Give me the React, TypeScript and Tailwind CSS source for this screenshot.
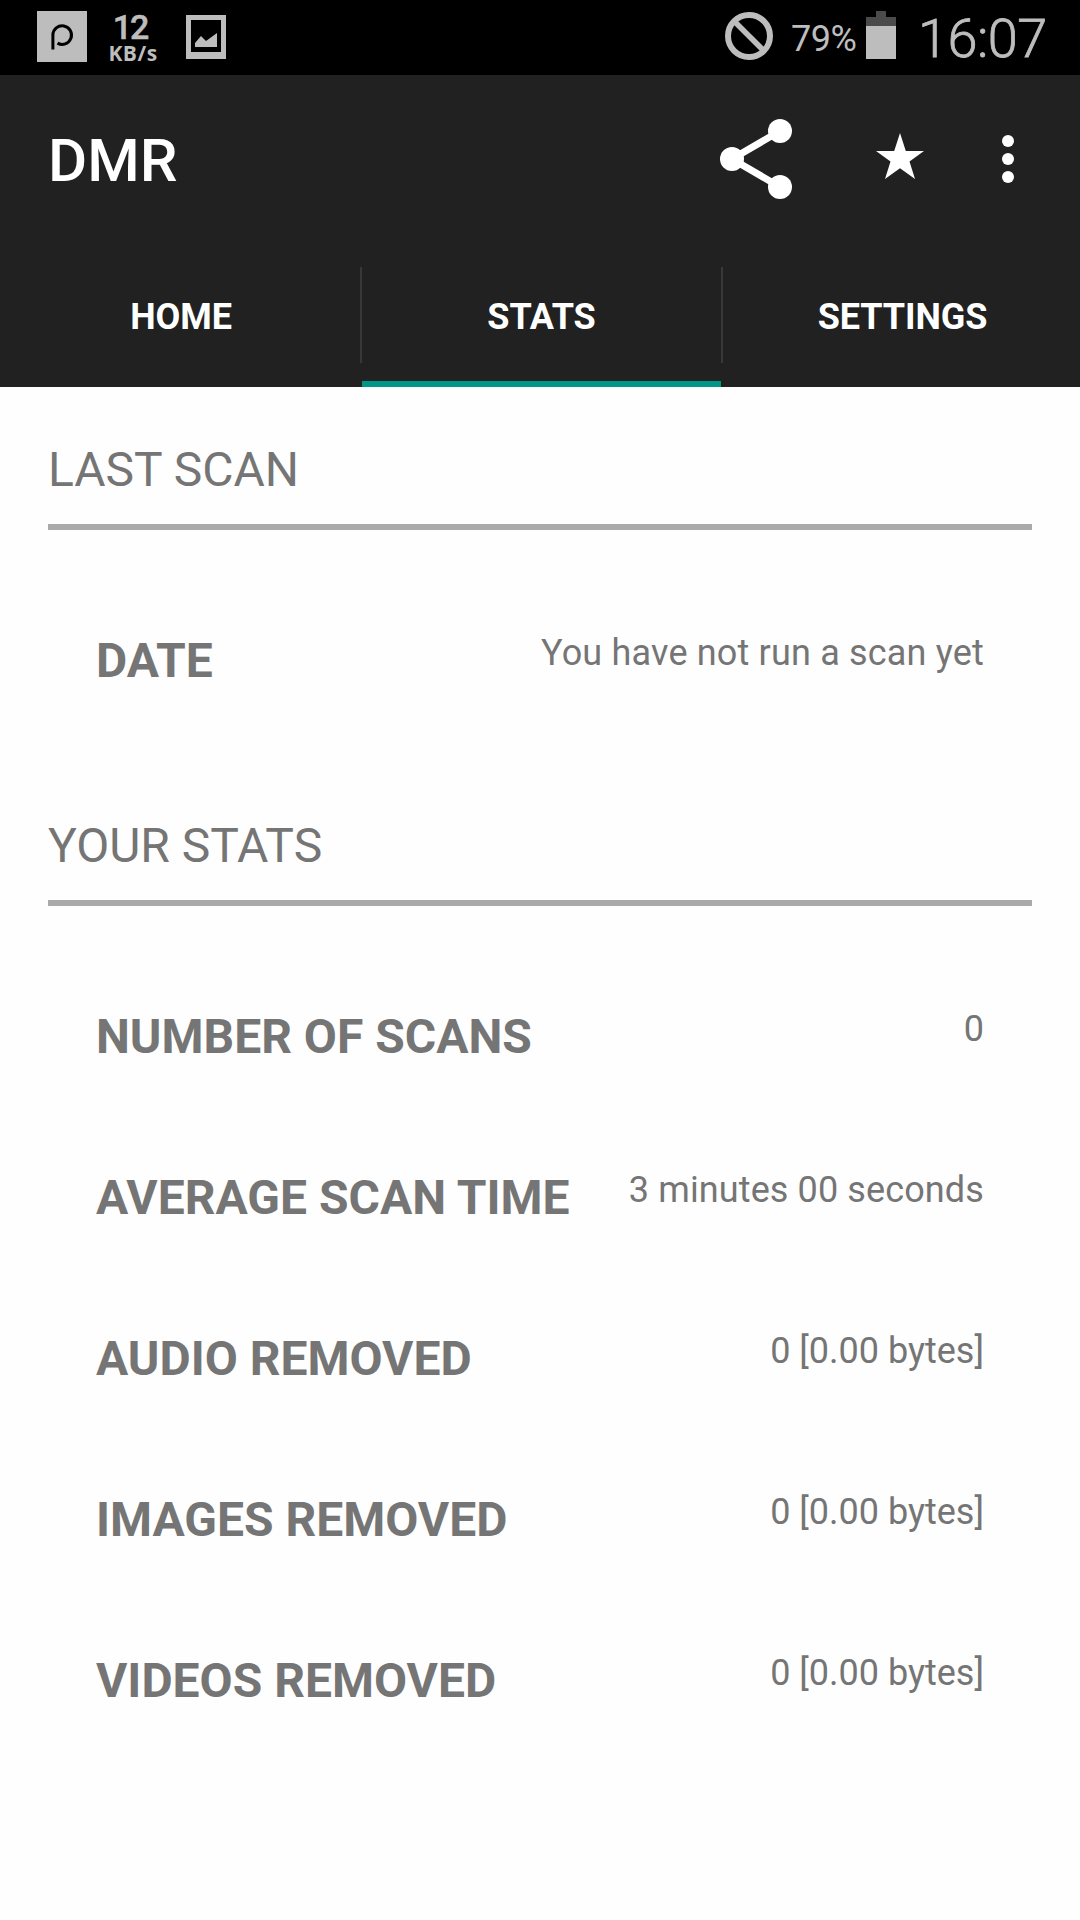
type Stat = { label: string; value: string; valueClass?: string };

const tabs = ['HOME', 'STATS', 'SETTINGS'];

const lastScan: Stat[] = [
  { label: 'DATE', value: 'You have not run a scan yet', valueClass: 'tracking-[0.18px]' },
];

const yourStats: Stat[] = [
  { label: 'NUMBER OF SCANS', value: '0' },
  { label: 'AVERAGE SCAN TIME', value: '3 minutes 00 seconds', valueClass: 'tracking-[0.12px]' },
  { label: 'AUDIO REMOVED', value: '0 [0.00 bytes]' },
  { label: 'IMAGES REMOVED', value: '0 [0.00 bytes]' },
  { label: 'VIDEOS REMOVED', value: '0 [0.00 bytes]' },
];

const StatusBar = () => (
  <div className="flex h-[75px] justify-between bg-black text-[#bdbdbd]">
    <div className="flex pl-[37px]">
      <svg className="mt-[11px] h-[51px] w-[50px]" viewBox="0 0 50 51">
        <rect width="50" height="51" fill="#bdbdbd" />
        <path d="M15.9 38.5V24A9.3 9.3 0 1 1 20.5 32.1" fill="none" stroke="#000" strokeWidth="3" />
      </svg>
      <div className="ml-[17px] flex w-[58px] flex-col items-center pt-[11px]">
        <span className="pr-[6px] text-[34px] leading-[32px] font-medium tracking-[-2px] [-webkit-text-stroke:0.5px_#bdbdbd]">12</span>
        <span className="font-['Open_Sans',sans-serif] text-[21px] leading-[20px] font-bold tracking-[0.5px]">KB/s</span>
      </div>
      <svg className="mt-[15px] ml-[24px] h-[44px] w-[40px]" viewBox="0 0 40 44" fill="#bdbdbd">
        <path fillRule="evenodd" d="M0 0H40V44H0ZM5 5V37H35V5Z" />
        <path d="M9 32V28L15 21L20 26L31 18V32Z" />
      </svg>
    </div>
    <div className="flex pr-[33px]">
      <svg className="mt-[12px] h-[48px] w-[48px]" viewBox="0 0 48 48">
        <circle cx="24" cy="24" r="21" fill="none" stroke="#bdbdbd" strokeWidth="6" />
        <path d="M10 10L38 38" stroke="#bdbdbd" strokeWidth="5.5" />
      </svg>
      <span className="mt-[18px] ml-[18px] w-[67px] text-[36px] leading-[42px] tracking-[-0.5px]">79%</span>
      <svg className="mt-[11px] ml-[8px] h-[48px] w-[30px]" viewBox="0 0 30 48">
        <path d="M10 0H20V6H30V15H0V6H10Z" fill="#4b4b4b" />
        <rect y="15" width="30" height="33" fill="#bdbdbd" />
      </svg>
      <span className="mt-[7px] ml-[22px] w-[129px] text-[54px] leading-[64px] font-light tracking-[-0.5px] [-webkit-text-stroke:0.8px_#bdbdbd]">
        16:07
      </span>
    </div>
  </div>
);

const ActionBar = () => (
  <div className="flex h-[168px] items-center justify-between pr-[66px] pl-[48px]">
    <h1 className="pt-[4px] text-[60px] leading-[70px] font-medium">DMR</h1>
    <div className="flex items-center">
      <svg className="h-[80px] w-[72px]" viewBox="0 0 72 80" fill="#fff">
        <path d="M60 12L12 40L60 68" fill="none" stroke="#fff" strokeWidth="7" />
        <circle cx="60" cy="12" r="12" />
        <circle cx="12" cy="40" r="12" />
        <circle cx="60" cy="68" r="12" />
      </svg>
      <svg className="ml-[84px] h-[52px] w-[48px]" viewBox="0 0 48 52" fill="#fff">
        <path d="M24 0L29.8 18H48L33.5 28.5L39 46L24 35.2L9 46L14.5 28.5L0 18H18.2Z" />
      </svg>
      <svg className="ml-[78px] h-[48px] w-[12px]" viewBox="0 0 12 48" fill="#fff">
        <circle cx="6" cy="6" r="6" />
        <circle cx="6" cy="24" r="6" />
        <circle cx="6" cy="42" r="6" />
      </svg>
    </div>
  </div>
);

const Tabs = () => (
  <div className="grid h-[144px] grid-cols-[360px_2px_359px_2px_357px]">
    {tabs.map((tab, i) => (
      <div key={tab} className="contents">
        {i > 0 && <div className="mt-[24px] h-[96px] bg-[#383838]" />}
        <button
          className={
            tab === 'STATS'
              ? 'border-b-[6px] border-[#009688] pt-[10px] text-[36px] leading-[42px] font-bold tracking-[-0.1px]'
              : 'border-b-[6px] border-transparent pt-[10px] pl-[2px] text-[36px] leading-[42px] font-bold tracking-[-0.1px]'
          }
        >
          {tab}
        </button>
      </div>
    ))}
  </div>
);

const Section = ({ title, stats }: { title: string; stats: Stat[] }) => (
  <section>
    <h2 className="border-b-[6px] border-[#aaaaaa] pb-[26px] text-[48px] leading-[56px]">{title}</h2>
    <div className="flex flex-col gap-[105px] px-[48px] pt-[102px]">
      {stats.map(({ label, value, valueClass }) => (
        <div key={label} className="flex h-[56px] items-start justify-between whitespace-nowrap">
          <span className="pt-px text-[48px] leading-[56px] font-bold">{label}</span>
          <span className={`text-[36px] leading-[42px] ${valueClass ?? ''}`}>{value}</span>
        </div>
      ))}
    </div>
  </section>
);

export default function App() {
  return (
    <div className="h-[1920px] w-[1080px] overflow-hidden bg-[#fefefe] font-[Roboto,sans-serif]">
      <StatusBar />
      <header className="bg-[#212121] text-white">
        <ActionBar />
        <Tabs />
      </header>
      <main className="flex flex-col gap-[130px] px-[48px] pt-[55px] text-[#757575]">
        <Section title="LAST SCAN" stats={lastScan} />
        <Section title="YOUR STATS" stats={yourStats} />
      </main>
    </div>
  );
}
